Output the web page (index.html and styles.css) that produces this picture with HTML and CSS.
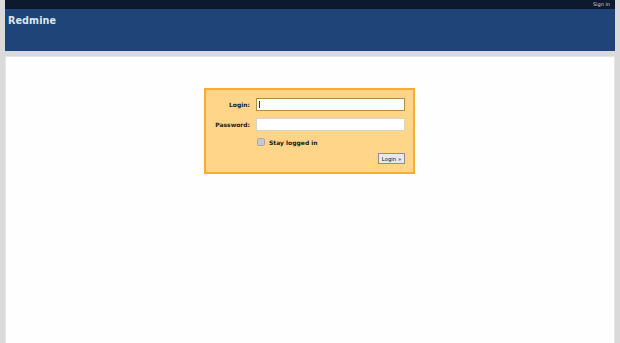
FILE: index.html
```html
<!DOCTYPE html>
<html>
<head>
<meta charset="utf-8">
<title>Redmine</title>
<link rel="stylesheet" href="styles.css">
</head>
<body>
<div class="page">
  <div class="top-menu"><a class="sign-in" href="#">Sign in</a></div>
  <div class="header"><h1 class="title">Redmine</h1></div>
  <div class="content">
    <form class="login-box">
      <label class="label" for="username">Login:</label>
      <div class="field focused"><span class="caret"></span></div>
      <label class="label" for="password">Password:</label>
      <div class="field"></div>
      <span></span>
      <div class="remember"><span class="check"></span><span class="remember-text">Stay logged in</span></div>
      <span></span>
      <div class="actions"><span class="btn">Login »</span></div>
    </form>
  </div>
</div>
</body>
</html>
```

FILE: styles.css
```css
html, body {
  margin: 0;
  padding: 0;
  height: 100%;
}
body {
  background: #dadada;
  font-family: "DejaVu Sans", Verdana, sans-serif;
  overflow: hidden;
}
.page {
  margin: 0 5px;
  display: flex;
  flex-direction: column;
  height: 343px;
}
.top-menu {
  height: 9px;
  background: #0d1a2e;
  display: flex;
  justify-content: flex-end;
  align-items: center;
  padding-right: 5px;
}
.sign-in {
  color: #c9d1dc;
  font-size: 5px;
  text-decoration: none;
  line-height: 9px;
}
.header {
  height: 42px;
  background: #1f4478;
}
.title {
  margin: 0;
  padding: 6px 0 0 3px;
  font-size: 9.6px;
  font-weight: bold;
  color: #dfe6ef;
  line-height: 12px;
  letter-spacing: 0.1px;
}
.content {
  margin-top: 5px;
  flex: 1;
  background: #fefefe;
  border: 1px solid #e6e6e6;
  border-bottom: none;
  display: flex;
  justify-content: center;
  align-items: flex-start;
  padding-top: 31px;
}
.login-box {
  margin-left: -1px;
  background: #ffd58a;
  border: 2px solid #f9ab36;
  padding: 8px 8px 8px 4px;
  display: grid;
  grid-template-columns: 40px 149px;
  column-gap: 6px;
  row-gap: 7px;
  align-items: center;
}
.label {
  text-align: right;
  font-size: 6px;
  font-weight: bold;
  color: #1a1a1a;
}
.field {
  height: 11px;
  background: #fff;
  border: 1px solid #dcd3c3;
  position: relative;
}
.field.focused {
  border-color: #b98a45;
}
.caret {
  position: absolute;
  left: 2px;
  top: 2px;
  width: 1px;
  height: 7px;
  background: #333;
}
.remember {
  display: flex;
  align-items: center;
  gap: 4px;
  height: 8px;
}
.check {
  width: 6px;
  height: 6px;
  background: #c8c8c8;
  border: 1px solid #a8a8a8;
  border-radius: 1.5px;
  margin-left: 1px;
}
.remember-text {
  font-size: 6px;
  font-weight: bold;
  color: #1a1a1a;
}
.actions {
  display: flex;
  justify-content: flex-end;
}
.btn {
  height: 9px;
  width: 25px;
  background: #e9e9e9;
  border: 1px solid #8e8e8e;
  font-size: 5.4px;
  color: #111;
  display: flex;
  align-items: center;
  justify-content: center;
}
```
